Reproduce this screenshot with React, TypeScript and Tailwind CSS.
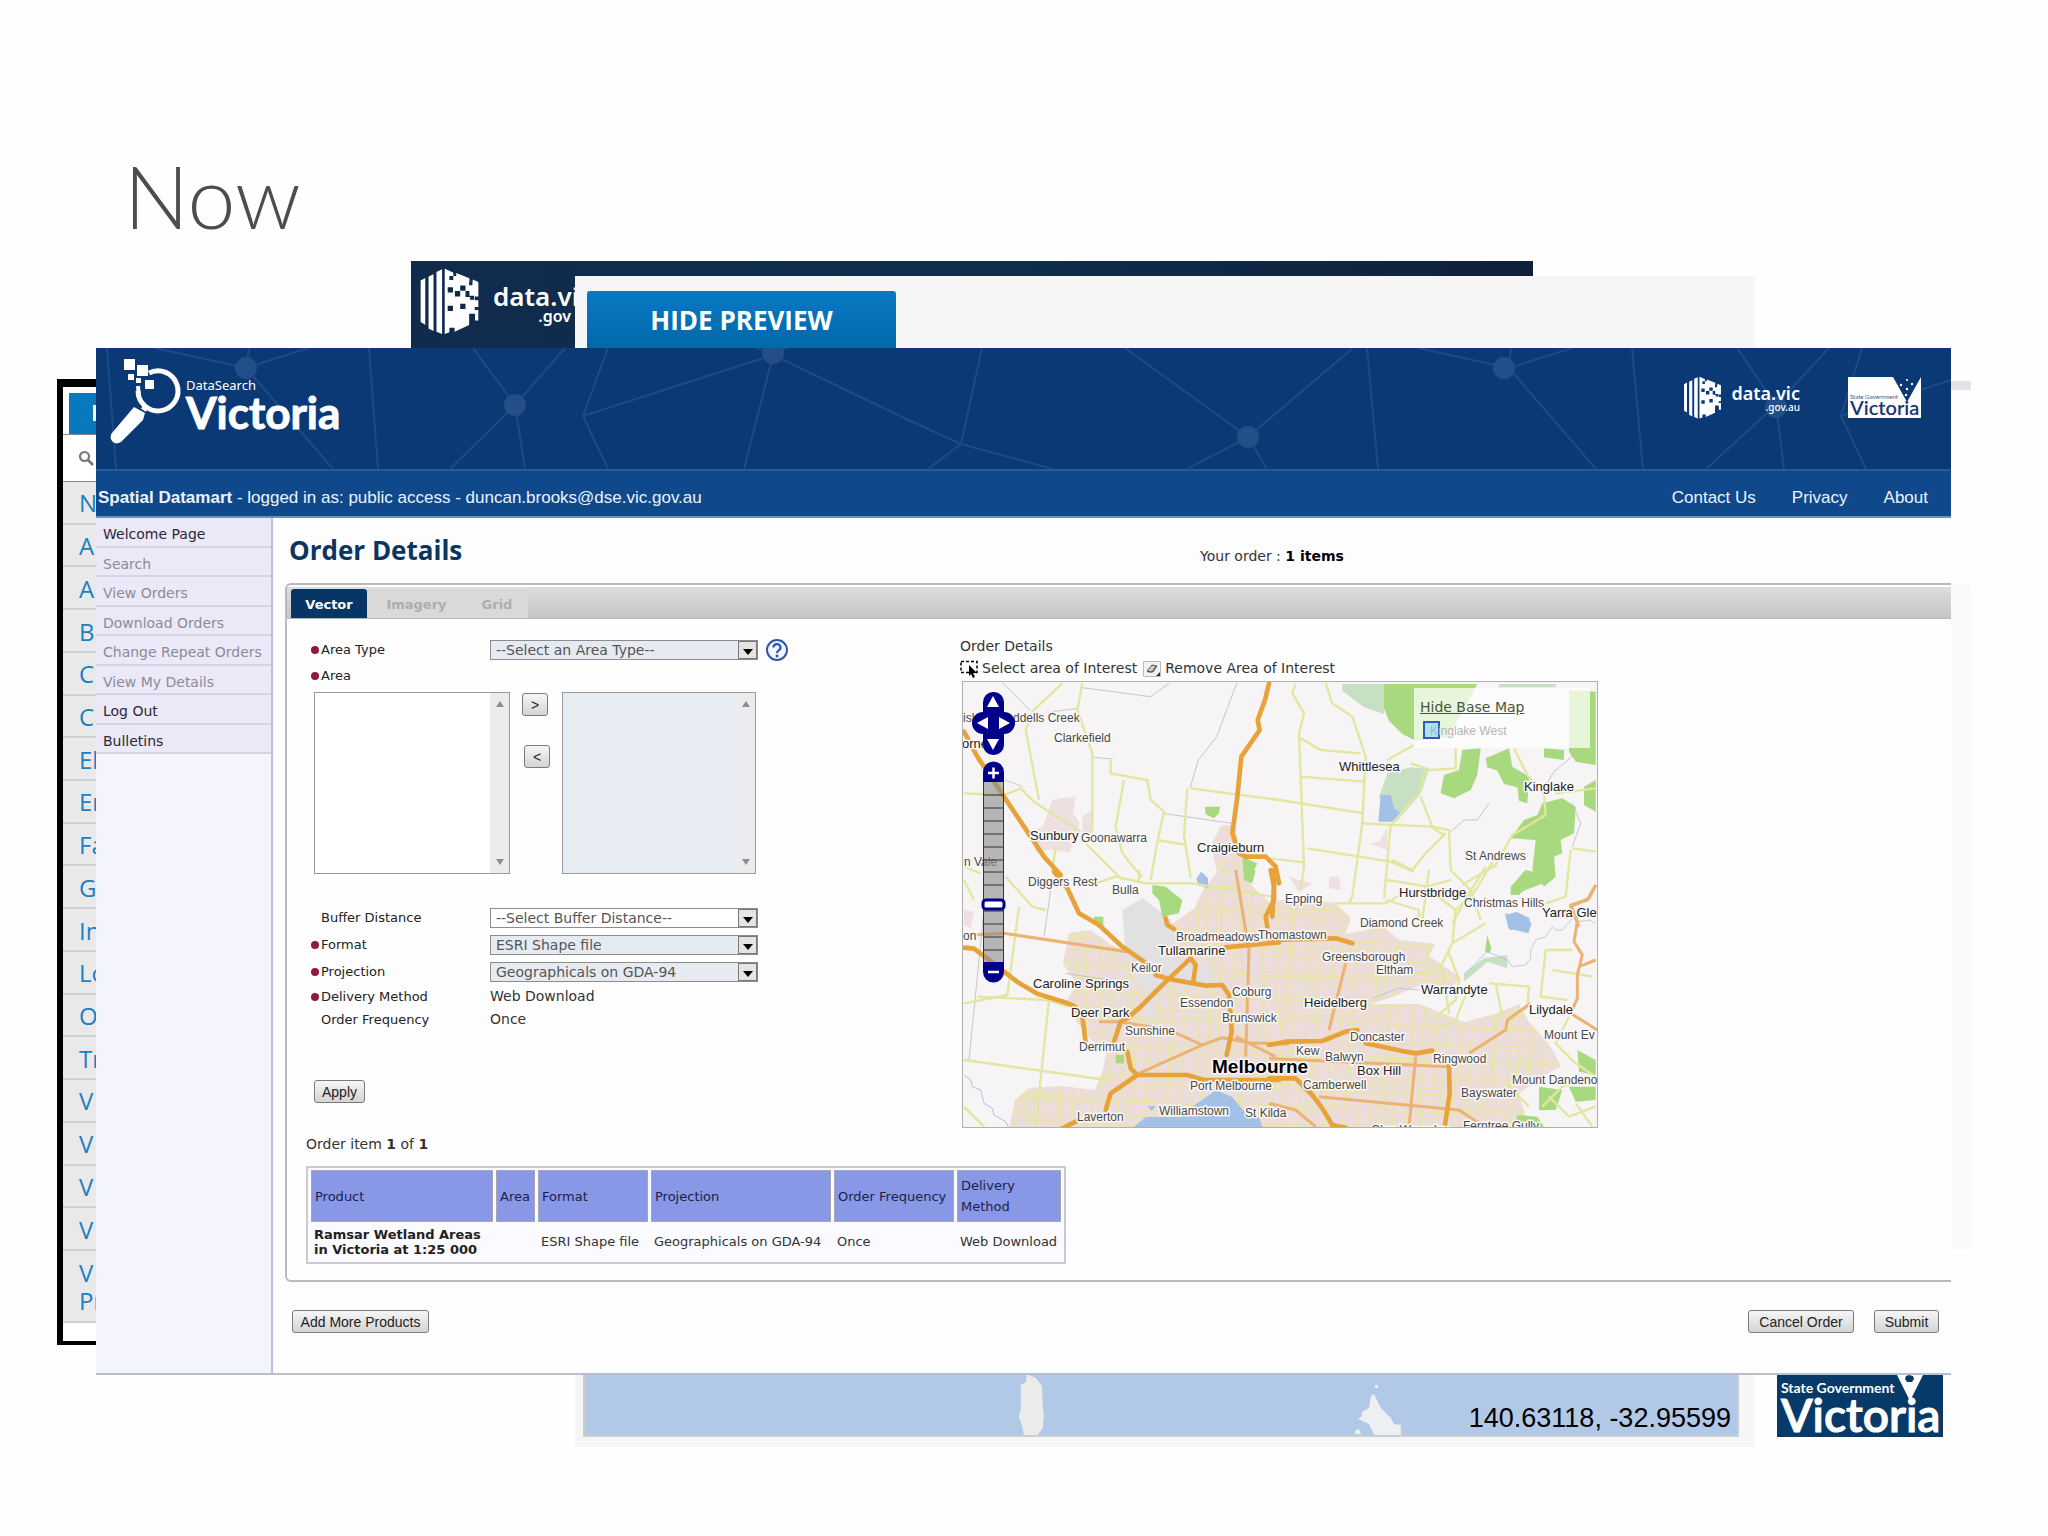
import React from "react";

const SERVICES = ["N", "A", "A", "B", "C", "C", "El", "En", "Fa", "G", "In", "Lo", "O", "Tr", "V", "V", "V", "V"];

const MENU = [
  { label: "Welcome Page", active: true },
  { label: "Search", active: false },
  { label: "View Orders", active: false },
  { label: "Download Orders", active: false },
  { label: "Change Repeat Orders", active: false },
  { label: "View My Details", active: false },
  { label: "Log Out", active: true },
  { label: "Bulletins", active: true },
];

/* ---------- logos ---------- */

function CubeMark({ className, ink }: { className: string; ink: string }) {
  return (
    <svg viewBox="0 0 185 206" className={className} aria-hidden="true">
      <g fill="#fff">
        <path d="M5 38l14-8v142l-14-8z" />
        <path d="M29 26l15-7v172l-15-8z" />
        <path d="M53 12l17-8v196l-17-7z" />
        <path d="M78 2l14 6 12 6v10h9V15l40 16v10h10v-6l17 7v44h-11v12h11v20h-11v9h11v32h-10v-20h-18v34l-44 20v-12H92v14l-14 5z" />
      </g>
      <g fill={ink}>
        <path d="M87 58h16v16H87zM125 53h16v16h-16zM109 70h16v16h-16zM87 114h16v16H87zM125 108h16v16h-16zM141 70h12v14h14v12h-12v-8h-14z" />
        <path d="M92 24h12v12H92zM152 40h10v12h-10z" />
      </g>
    </svg>
  );
}

function DataSearchLogo() {
  return (
    <svg viewBox="0 0 240 92" className="h-[92px] w-[240px]" role="img" aria-label="DataSearch Victoria">
      <g fill="#fff">
        <path d="M14 3h11v11H14zM27 9h11v11H27zM18 18h6v6h-6zM26 22h5v5h-5zM35 24h9v9h-9z" />
        <path d="M24 51l11 6-2 7-21 21a6 6 0 0 1-10-8z" />
      </g>
      <path d="M27 36A20 20 0 1 0 38 18" fill="none" stroke="#fff" strokeWidth="5" transform="translate(1 -1)" />
      <path d="M28 30l1 12" stroke="#fff" strokeWidth="4" />
      <path d="M32 51l5 3" stroke="#fff" strokeWidth="4" />
      <text x="76" y="34" fill="#fff" fontFamily="Noto Sans, sans-serif" fontSize="13">DataSearch</text>
      <text x="76" y="73" fill="#fff" stroke="#fff" fontFamily="Lato, sans-serif" fontWeight="700" fontSize="44">Victoria</text>
    </svg>
  );
}

function VicBadge() {
  return (
    <svg viewBox="0 0 73 41" className="h-[41px] w-[73px]" role="img" aria-label="State Government Victoria">
      <path d="M0 0h73v41H0z" fill="#fff" />
      <path d="M45 0h28L59 25z" fill="#0b3873" />
      <g fill="#fff">
        <circle cx="59" cy="3" r="1" /><circle cx="53" cy="8" r="1.2" /><circle cx="64" cy="7" r="1.2" />
        <circle cx="59" cy="12" r="1.2" /><circle cx="58" cy="18" r="1.2" />
      </g>
      <text x="2" y="22" fill="#35568b" fontFamily="Lato, sans-serif" fontSize="6">State Government</text>
      <text x="2" y="38" fill="#16366f" fontFamily="Lato, sans-serif" fontWeight="600" fontSize="20">Victoria</text>
    </svg>
  );
}

function HeaderNetwork() {
  return (
    <svg viewBox="96 348 1855 121" preserveAspectRatio="xMinYMin slice" className="absolute inset-0 h-full w-full" aria-hidden="true">
      <g fill="none" stroke="#2a5490" strokeWidth="2" opacity=".65">
        <path d="M107 348L116 469M155 348L246 368L308 348M249 348L246 368L333 469M369 348L378 469" />
        <path d="M473 348L515 405L565 348M450 469L515 405L525 469M608 348L583 416L608 469M583 416L773 355L744 469M740 340L773 355L900 416L961 444L1053 469M800 340L773 355M982 348L961 444L928 469" />
        <path d="M1125 348L1248 437L1353 348M1187 469L1248 437L1267 469M1367 348L1378 469" />
        <path d="M1418 348L1509 368L1572 348M1511 348L1509 368L1596 469M1632 348L1643 469" />
        <path d="M1737 348L1776 405L1829 348M1706 469L1776 405L1784 469M1862 348L1841 416L1866 469M1841 416L1951 380" />
      </g>
      <g fill="#234e88">
        <circle cx="246" cy="368" r="11" /><circle cx="515" cy="405" r="11" /><circle cx="773" cy="353" r="11" />
        <circle cx="1248" cy="437" r="11" /><circle cx="1504" cy="368" r="11" /><circle cx="1776" cy="407" r="11" />
      </g>
    </svg>
  );
}

/* ---------- map ---------- */

type Label = [string, number, number, number?];

const LABELS: Label[] = [
  ["isl", 964, 722], ["ddells Creek", 1014, 722], ["Clarkefield", 1055, 742], ["orne", 963, 748, 13],
  ["Sunbury", 1031, 840, 13], ["Goonawarra", 1082, 842], ["n Vale", 965, 866], ["Craigieburn", 1198, 852, 13],
  ["Diggers Rest", 1029, 886], ["Bulla", 1113, 894], ["on", 964, 940], ["Broadmeadows", 1177, 941],
  ["Thomastown", 1259, 939], ["Tullamarine", 1159, 955, 13], ["Keilor", 1132, 972], ["Caroline Springs", 1034, 988, 13],
  ["Coburg", 1233, 996], ["Essendon", 1181, 1007], ["Deer Park", 1072, 1017, 13], ["Brunswick", 1223, 1022],
  ["Sunshine", 1126, 1035], ["Derrimut", 1080, 1051], ["Port Melbourne", 1191, 1090],
  ["Williamstown", 1160, 1115], ["Laverton", 1078, 1121], ["St Kilda", 1246, 1117], ["Whittlesea", 1340, 771, 13],
  ["Kinglake", 1525, 791, 13], ["St Andrews", 1466, 860], ["Hurstbridge", 1400, 897, 13], ["Christmas Hills", 1465, 907],
  ["Yarra Gle", 1543, 917, 13], ["Epping", 1286, 903], ["Diamond Creek", 1361, 927], ["Greensborough", 1323, 961],
  ["Eltham", 1377, 974], ["Warrandyte", 1422, 994, 13], ["Heidelberg", 1305, 1007, 13], ["Doncaster", 1351, 1041],
  ["Kew", 1297, 1055], ["Lilydale", 1530, 1014, 13], ["Mount Ev", 1545, 1039], ["Balwyn", 1326, 1061],
  ["Ringwood", 1434, 1063], ["Box Hill", 1358, 1075, 13], ["Camberwell", 1304, 1089], ["Mount Dandeno", 1513, 1084],
  ["Bayswater", 1462, 1097], ["Ferntree Gully", 1464, 1130], ["Glen Waverley", 1372, 1134],
];

const NW = "translate(940 620) scale(.33333)";
const NE = "translate(1270 670) scale(.33333)";
const SW = "translate(940 870) scale(.33333)";
const SE = "translate(1270 870) scale(.33333)";

const URBAN =
  "M1070 933L1092 930L1112 945L1130 952L1146 966L1160 962L1178 950L1172 925L1196 908L1204 890L1218 872L1212 845L1222 826L1236 824L1240 850L1250 862L1252 885L1270 902L1300 898L1336 903L1352 918L1346 934L1368 930L1384 926L1400 940L1436 944L1430 956L1462 978L1450 988L1424 984L1396 996L1372 1004L1420 1004L1440 1012L1466 1022L1496 1014L1520 1004L1530 1022L1550 1044L1562 1066L1540 1078L1520 1094L1530 1129L1010 1129L1016 1100L1030 1088L1062 1086L1096 1090L1104 1070L1108 1048L1092 1040L1078 1022L1068 1000L1078 984L1064 964z";

const BAY = "M1132 1129L1147 1117L1183 1117L1193 1107L1203 1100L1217 1090L1233 1097L1250 1117L1260 1117L1264 1129z";

function gridLines() {
  const v: string[] = [];
  for (let i = 0; i < 62; i++) {
    const x = 1000 + i * 9 + ((i * 7) % 5);
    const top = 820 + ((i * 37) % 90);
    v.push(`M${x} ${top}L${x - 6 + (i % 3) * 3} ${top + 110}L${x - 10 + (i % 4) * 4} 1040L${x - 12} 1130`);
  }
  for (let i = 0; i < 34; i++) {
    const y = 830 + i * 9 + ((i * 5) % 4);
    v.push(`M1000 ${y}l130 ${(i % 3) * 4}l${90 + (i % 4) * 25} ${(i % 4) * 3}l120 ${(i % 5) * 3 - 3}l240 ${12 - (i % 3) * 5}`);
  }
  return v.join("");
}

function BaseMap() {
  return (
    <svg viewBox="964 682 634 445" preserveAspectRatio="none" className="h-full w-full" role="img" aria-label="Map of Melbourne">
      <defs>
        <clipPath id="urban"><path d={URBAN} /></clipPath>
      </defs>
      <path d="M963 682h636v448H963z" fill="#f6f4f5" />
      <path d={URBAN} fill="#ecdcdc" />
      <g fill="#eedfe0">
        <path transform={NW} d="M340 540l70-12-8 50 20 30-30 90-60-10-40 10-20-60 40-20zM430 590l30-20v70l-30-5z" />
        <path transform={NE} d="M300 520l30-5 25-40v65zM60 620l30 10 40 10-40 25zM180 620l30 0 5 40-35-5z" />
        <path transform={SW} d="M75 120l30 5-10 50-20-10z" />
      </g>
      <g clipPath="url(#urban)">
        <path d={gridLines()} fill="none" stroke="#e8e6a4" strokeWidth="1.2" />
      </g>
      <path transform={SW} d="M550 120l60-35 80 60 40 60-20 60 60 20 50 10 0 60-60 0-70-20-60 20 20 60 10 40-40-30 0-60-60-110z" fill="#e2e1e2" />
      <g fill="#a8d97f">
        <path transform={NE} d="M345 42h280l-30 60-60 100-95 10-40-20-40-40-20-50zM900 60l80 5v220l-60-10-20-30zM825 235l60 5v30l-60-8zM580 240l55-5-10 80-20 45-50 25-40-15 10-55 45-15zM650 265l70-30 10 55 50 30-5 80-25-8-5-40-40-10-20-40-30-10zM820 400l60-15 40 25-5 80-40 20 5 40-25 10 5 60-35 30-35-50 10-90-75-5 40-55 40-15zM770 600l20 5-10 40-30 30-25 0 0-25z" />
        <path transform={NE} d="M945 350l35-20v95l-35-20z" />
        <path transform={NW} d="M798 560l45 0-3 20-15 15-25-12zM910 710l45 20-20 45-20 0z" />
        <path transform={SW} d="M640 45l40 5 50 40-10 40-50 10-10-50-20-20zM465 140l28 0 0 30-28-5zM915 0h35l-10 40-25-10zM530 555l25 0 0 25-25 0z" />
        <path transform={SE} d="M765 5l85 0 0 25-80 30-30 15-15-20zM655 195l12 40-5 15-14-5zM925 540l55 30v45l-50-10zM810 650l70 10-20 60-50 0zM900 650l80 0v40l-60 5zM745 735l60 5 20 30-90 0z" />
      </g>
      <g fill="#c7dfc2">
        <path transform={NE} d="M220 42h125v90l-60-20-65-50zM690 42h170v10H690zM355 310l70-18 55 5-25 75-75 85-50-75z" />
        <path transform={SE} d="M585 310l60-45 70-10 0 40-60-20-40 35-30 25z" />
      </g>
      <g fill="#a3c0e6">
        <path transform={NE} d="M335 375l30 0 10 40 20 15-25 25-42 0zM712 735l30-10 40 20 0 30-60 5z" />
        <path transform={SE} d="M708 130l50 10 30 20-10 30-60-15z" />
        <path d={BAY} />
        <path transform={SW} d="M772 25l15-20 20 20 0 30-30-10zM625 708l25 0-12 15z" />
      </g>
      <g fill="none" stroke="#b9bcc4" strokeWidth="2.5">
        <path transform={NW} d="M190 188l40 40 45 45M430 203l205 27 55-40M893 190l-60 160-55 70-25 85M670 580l210 30M200 480l50 20M340 275l80-10M465 412l55 5" />
        <path transform={NE} d="M545 485l40-35 40 0 35-50M915 255l-60 50-25 40M910 400l25 60-25 70" />
        <path transform={SW} d="M135 120L90 570M335 60l-20 140M380 310l130 20" />
        <path transform={SE} d="M980 160l-20-10-30 5-15-15-35 40-20 0-10-10-20 30-30 10-15 30 0 25-15 20-40 5-15-20-60-25-60 60M310 385l80-30 60 5" stroke="#b4c3dd" />
        <path transform={SW} d="M75 615l20 15 5 20 25 10 10 40 25 15 5 20 35 20 10 20" stroke="#9fb8dd" />
      </g>
      <g fill="none" stroke="#e1e79f" strokeWidth="7" strokeLinejoin="round">
        <path transform={NW} d="M430 190l-15 80 45 130 0 230-30 30 60 60 60 60M370 190l-85 80-25 60 40 210M75 520l120 5 50-20 40 40 60 40 80 50M515 420v40l110 20 10 60 40 35-20 90-20 115M555 480l-25 140 20 80 40 50 20 20M745 505l-10 140 20 130M755 505l265 35M655 660l90 15M350 680l-10 70M75 740l50 20" />
        <path transform={NE} d="M80 40l-10 30 35 60-15 60 15 400-10 70M170 40l20 60 60 40 40 120-10 200-30 220-10 20M95 205l60 35 120 10M95 320l190 15M0 385l285 45M115 535l250 40 70 30M355 270l80-45M560 235l0 60-75 5-60-20M735 235l40 80 50 60 5 60-100 60-50 90-100 60M470 300l-20 70-85 95-20 220M275 460l210 10 40 25M455 380l35 90 50 10 5 120 60 60 30 90M370 570l60 30 40-50 60-60M355 630l120 20 70-20M0 565l105 12M905 540l-15 140-60 20M910 535l70 10M860 370l120-15M350 690l100 30 0 50M480 600l-20 150M650 590l-50 80-50 90" />
        <path transform={SW} d="M240 110l-35 265-130 25M200 20l80 90 40 10M115 380l210 10 60 20M330 390l-40 380M75 570l430 60M245 680l120 0M75 710l60 60M75 30l30 60M470 40l60-20 90 20 140 0 240 40M600 40l0-40" />
        <path transform={SE} d="M200 100l150 0 70-40 60 0 80 60-10 100-40 80-90 10M560 120l60-60 60-100M550 220l100-60M540 250l30 80-10 60-70 60M830 240l-15 140 80 10M830 240l80 0M660 340l120 10-5 60-60 50M680 340l20 100M600 350l-40 100-80 40M520 300l20 130M850 300l120 20M1000 620l-120 30-60 60M900 440l-40 80 60 60 60 40M920 700l50 70M840 680l60 60 80-30M760 560l-40 90 60 60" />
      </g>
      <g fill="none" stroke="#ecb274" strokeWidth="9" strokeLinejoin="round">
        <path transform={SW} d="M105 195l90-5 370 55M890 0l40 240-10 320M480 455l60 0 150 25 100 45 60-22 80 15 120 5M600 610l190-85M890 500l120 60" />
        <path transform={SE} d="M230 280l-50 200M440 560l-20 210M0 565l540 25M150 680l420 40 60 40M600 550l110-70 5-30 70-50M980 45l-25 45-50 15 20 50-10 60 25 40-15 60 0 70-20 45 80 50M930 290l50-20M0 700l80 20 60 50" />
        <path transform={NE} d="M980 645l-20 40-55 25 25 60" />
      </g>
      <g fill="none" stroke="#e8a23a" strokeWidth="14" strokeLinejoin="round" strokeLinecap="round">
        <path transform={NW} d="M990 190l-12 50-22 60 6 30-55 80-12 120-15 110 20 60 20 10 60 0 30 30 10 50M75 335l40 75 80 120 60 90 60 90 50 55" />
        <path transform={SW} d="M345 5l40 50 35 75 60 35 70 65 65 45M650 315l40 12 110 20 50-2 20 30 8 110-15 70M680 145l5 20 20 12M860 232l160-15M755 265l15 20-8 55M755 265l-80 75-70 70-40 35-20 10-20 60M75 233l30 3 40 30 90 70 60 35 80 25 30 12 25 30 10 80M565 545l10 50 20 20-80 55-15 50M410 755l-40 20M595 615l150 0 50 15 130 0 95 0M1005 0l0 90-25 50 5 30" />
        <path transform={SE} d="M0 210l200-5 50 15M0 525l50-10 110-2 70-28 35-5M290 520l120 25 30 5 50-8M540 580l2 90-14 95M0 625l80 0 50 50 30 40 30 50 40 8M5 0l10 50-5 90" />
      </g>
      <g fontFamily="Liberation Sans, Arial, sans-serif" stroke="#fbf9f9" strokeWidth="3" strokeLinejoin="round" style={{ paintOrder: "stroke" }}>
        {LABELS.map(([text, x, y, size]) => (
          <text key={text + x} x={x} y={y} fontSize={size ?? 12} fill={size ? "#222" : "#484848"}>{text}</text>
        ))}
        <text x="1213" y="1073" fontSize="19" fontWeight="700" fill="#000">Melbourne</text>
      </g>
      {/* pan and zoom controls */}
      <g fill="#00008b">
        <rect x="984" y="692" width="21" height="63" rx="10" />
        <rect x="973" y="712" width="43" height="22" rx="11" />
        <path d="M984 782v-10a10.500 10.500 0 0 1 21 0v10zM984 962v10a10.500 10.500 0 0 0 21 0v-10z" />
      </g>
      <path d="M994 696l6 11h-12zM994 750l6-11h-12zM978 723l11-6v12zM1011 723l-11-6v12z" fill="#fff" />
      <path d="M989 773h11M994.500 767.500v11M989 972h11" stroke="#fff" strokeWidth="2.500" />
      <rect x="984" y="782" width="21" height="180" fill="#8a8a8a" fillOpacity=".6" />
      <path d="M984 795h21M984 808h21M984 821h21M984 834h21M984 847h21M984 860h21M984 872h21M984 885h21M984 911h21M984 924h21M984 937h21M984 950h21M984.500 782v180M1004.500 782v180" stroke="#333" strokeWidth="1" />
      <rect x="984" y="900" width="21" height="9" rx="3" fill="#fff" stroke="#00008b" strokeWidth="3" />
      {/* base map switcher */}
      <rect x="1415" y="688" width="176" height="60" fill="#fff" fillOpacity=".72" />
      <rect x="1425" y="722" width="15" height="16" fill="#a9e3f7" stroke="#3558b5" strokeWidth="2" />
      <text x="1431" y="735" fontFamily="Liberation Sans, Arial, sans-serif" fontSize="12" fill="#b5b5b5">Kinglake West</text>
    </svg>
  );
}

/* ---------- form parts ---------- */

function Label({ text, required, htmlFor }: { text: string; required?: boolean; htmlFor?: string }) {
  return (
    <label htmlFor={htmlFor} className="flex w-[179px] shrink-0 items-center text-[13px] text-[#222]">
      <span className="flex w-[10px] shrink-0">{required && <span className="h-2 w-2 rounded-full bg-[#8f1a3a]" />}</span>
      {text}
    </label>
  );
}

function Select({ id, value, tinted }: { id: string; value: string; tinted?: boolean }) {
  return (
    <span className={"relative flex h-5 w-[268px] border border-[#8c8c8c] " + (tinted ? "bg-[#e5ebf1]" : "bg-white")}>
      <select id={id} className="w-full appearance-none bg-transparent pl-[5px] text-[14px] leading-[18px] text-[#555] outline-none">
        <option>{value}</option>
      </select>
      <span className="pointer-events-none absolute inset-y-0 right-0 flex w-[19px] items-center justify-center border border-[#777] bg-[#e4e4e4]">
        <svg viewBox="0 0 10 6" className="mt-1 h-[6px] w-[10px]" aria-hidden="true"><path d="M0 0h10L5 6z" fill="#000" /></svg>
      </span>
    </span>
  );
}

function ListBox({ label, className }: { label: string; className: string }) {
  return (
    <div className={"flex h-[182px] border border-[#9a9a9a] " + className}>
      <select multiple aria-label={label} className="min-w-0 flex-1 appearance-none overflow-hidden bg-transparent outline-none" />
      <div className="flex w-[19px] flex-col items-center justify-between bg-[#ececee] py-2" aria-hidden="true">
        <svg viewBox="0 0 8 6" className="h-[6px] w-2"><path d="M0 6h8L4 0z" fill="#8d8d8d" /></svg>
        <svg viewBox="0 0 8 6" className="h-[6px] w-2"><path d="M0 0h8L4 6z" fill="#8d8d8d" /></svg>
      </div>
    </div>
  );
}

function Button({ children, className = "" }: { children: React.ReactNode; className?: string }) {
  return (
    <button
      type="button"
      className={"flex h-[23px] shrink-0 items-center justify-center rounded-[3px] border border-[#7b7b7b] bg-linear-to-b from-[#f6f6f6] to-[#d4d4d6] font-['Liberation_Sans',Arial,sans-serif] text-[14px] leading-none whitespace-nowrap text-[#222] " + className}
    >
      {children}
    </button>
  );
}

const TH = "border border-[#a6a6b4] bg-[#8998e6] px-[3px] text-left text-[13px] leading-[21px] font-normal text-[#1b2148]";

/* ---------- windows ---------- */

function ServicesWindow() {
  return (
    <div className="absolute top-[379px] left-[57px] flex h-[966px] w-[60px] flex-col overflow-hidden border-4 border-t-8 border-l-[6px] border-black bg-white font-['Open_Sans',sans-serif] text-[24px] leading-7 text-[#1c7fc4]">
      <div className="mt-[6px] ml-[6px] h-[41px] shrink-0 bg-[#0879bd] py-3 pl-6">
        <div className="h-4 w-1 bg-white" />
      </div>
      <div className="flex h-[48px] shrink-0 items-center border-y border-[#888] pl-[15px]">
        <svg viewBox="0 0 16 16" className="h-4 w-4" aria-hidden="true">
          <circle cx="6.500" cy="6.500" r="4.500" fill="none" stroke="#777" strokeWidth="2.200" />
          <path d="M10 10l5 5" stroke="#777" strokeWidth="2.600" />
        </svg>
      </div>
      <ul className="flex flex-1 flex-col bg-[#e9e9e9]">
        {SERVICES.map((s, i) => (
          <li key={i} className="flex flex-1 items-center border-b-2 border-[#cfcfcf] pt-[2px] pl-4">{s}</li>
        ))}
        <li className="h-[72px] shrink-0 border-b-2 border-[#cfcfcf] pt-2 pl-4">V<br />Pr</li>
      </ul>
      <div className="h-[18px] shrink-0 bg-white" />
    </div>
  );
}

function PreviewWindow() {
  return (
    <div className="absolute top-[276px] right-[293px] left-[575px] flex h-[1171px] flex-col justify-between bg-[#f6f6f7] pr-4">
      <button type="button" className="mt-[15px] ml-3 h-[62px] w-[309px] rounded-t-[3px] bg-linear-to-b from-[#0879c4] to-[#0267a8] pb-1 font-['Open_Sans',sans-serif] text-[26px] font-bold text-white">
        HIDE PREVIEW
      </button>
      <div className="relative mb-[10px] ml-2 flex h-[67px] items-end justify-end border-2 border-[#c9ced4] bg-[#b1c9e7] pr-[6px] font-['Liberation_Sans',Arial,sans-serif] text-[27px] leading-[34px] text-black">
        <svg viewBox="584 1374 1155 63" className="absolute inset-0 h-full w-full" aria-hidden="true">
          <path d="M1027 1376l9 4 6 8 1 20 1 10-1 12-6 8-13-1-2-10-3-8 2-8 0-24 5-3z" fill="#ecedea" />
          <path d="M1372 1398l3-2 4 8 3 6 10 10 3 6 7 1 0 11-26 0-6-12-11-5 4-3 0-4 7-4zM1376 1387l3 0 0 3-3 0zM1356 1433l4-2 2 5-6 0z" fill="#ecf0f0" />
        </svg>
        <span className="relative">140.63118, -32.95599</span>
      </div>
    </div>
  );
}

function OrderWindow() {
  return (
    <div className="relative mr-[97px] ml-24 border-b-2 border-[#b9bfce] bg-[#fdfdfe] font-['DejaVu_Sans',Verdana,sans-serif] text-[14px] text-[#333]">
      <header>
        <div className="relative flex h-[121px] items-start justify-between overflow-hidden bg-[#0a3976] pr-[30px] pl-[14px]">
          <HeaderNetwork />
          <div className="relative pt-2"><DataSearchLogo /></div>
          <div className="relative flex items-start gap-12 pt-7">
            <div className="flex gap-[9px]">
              <CubeMark className="h-[44px] w-[39px]" ink="#0a3976" />
              <div className="flex flex-col items-end pt-[7px] font-['Noto_Sans',sans-serif] text-white">
                <span className="text-[18px] leading-5 font-semibold">data.vic</span>
                <span className="text-[10px] leading-2 font-medium">.gov.au</span>
              </div>
            </div>
            <div className="pt-px"><VicBadge /></div>
          </div>
        </div>
        <div className="flex h-[49px] items-center justify-between border-y-2 border-t-[#1f5c9f] border-b-[#6d90c0] bg-[#0f498c] pt-2 pr-[23px] pl-[2px] font-['Liberation_Sans',Arial,sans-serif] text-[#eef3fb]">
          <p className="text-[17px]"><b>Spatial Datamart</b> - logged in as: public access - duncan.brooks@dse.vic.gov.au</p>
          <nav className="flex gap-9 text-[17px]">
            <a href="#contact">Contact Us</a>
            <a href="#privacy">Privacy</a>
            <a href="#about">About</a>
          </nav>
        </div>
      </header>

      <div className="flex">
        <aside className="w-[177px] shrink-0 border-r-2 border-[#bfbfdc] bg-[#f3f4fd]">
          <nav className="grid h-[236px] auto-rows-fr">
            {MENU.map((m) => (
              <a key={m.label} href="#menu" className={"flex items-center border-b-2 border-[#d3d3e4] bg-[#ebe9f7] pt-[6px] pl-[7px] whitespace-nowrap " + (m.active ? "text-[#2c2636]" : "text-[#8d8a99]")}>
                {m.label}
              </a>
            ))}
          </nav>
        </aside>

        <main className="min-w-0 flex-1 pb-10">
          <div className="flex h-[65px] items-center pl-4">
            <h1 className="w-[911px] pb-[2px] font-['Open_Sans',sans-serif] text-[26px] leading-8 font-bold text-[#0b3560]">Order Details</h1>
            <p className="pt-3">Your order : <b className="text-black">1 items</b></p>
          </div>

          <section className="ml-3 rounded-l-[6px] border-y-2 border-l-2 border-[#b9bac0] bg-[#fefefe] pt-[2px] pb-4">
            <div className="flex h-8 items-end border-b border-[#b8b8b8] bg-linear-to-b from-[#dedee0] to-[#c5c4c6] pl-1 text-[13px] font-bold" role="tablist">
              <button type="button" role="tab" aria-selected="true" className="h-[29px] w-[76px] rounded-t-[3px] bg-[#063566] pt-[2px] text-white">Vector</button>
              <button type="button" role="tab" aria-selected="false" className="h-[29px] w-[99px] bg-[#d9d9da] pt-[2px] text-[#adadb0]">Imagery</button>
              <button type="button" role="tab" aria-selected="false" className="h-[29px] w-[62px] bg-[#d9d9da] pt-[2px] text-[#adadb0]">Grid</button>
            </div>

            <div className="flex items-start">
              <form className="w-[673px] shrink-0 pt-[18px] pl-6">
                <div className="flex h-[26px] items-center">
                  <Label text="Area Type" required htmlFor="areaType" />
                  <Select id="areaType" value="--Select an Area Type--" tinted />
                  <svg viewBox="0 0 24 24" className="ml-[7px] h-6 w-6" role="img" aria-label="Help">
                    <circle cx="12" cy="12" r="10" fill="#f2f6ff" stroke="#2f55a8" strokeWidth="2" />
                    <path d="M8.500 9.500a3.500 3.300 0 1 1 5.200 2.800c-1.200.8-1.700 1.200-1.700 2.700" fill="none" stroke="#2f55a8" strokeWidth="2.200" />
                    <circle cx="12" cy="18" r="1.400" fill="#2f55a8" />
                  </svg>
                </div>
                <div className="flex h-[26px] items-center"><Label text="Area" required /></div>
                <div className="mt-[3px] flex pl-[3px]">
                  <ListBox label="Available areas" className="w-[196px] bg-white" />
                  <div className="flex w-[52px] flex-col items-start gap-[29px] pt-px pl-3">
                    <Button className="w-[26px]">&gt;</Button>
                    <Button className="ml-[2px] w-[26px]">&lt;</Button>
                  </div>
                  <ListBox label="Selected areas" className="w-[194px] bg-[#e6ecf2]" />
                </div>
                <div className="mt-[30px] flex h-[27px] items-center"><Label text="Buffer Distance" htmlFor="buffer" /><Select id="buffer" value="--Select Buffer Distance--" /></div>
                <div className="flex h-[27px] items-center"><Label text="Format" required htmlFor="format" /><Select id="format" value="ESRI Shape file" tinted /></div>
                <div className="flex h-[27px] items-center"><Label text="Projection" required htmlFor="projection" /><Select id="projection" value="Geographicals on GDA-94" tinted /></div>
                <div className="flex h-[23px] items-center"><Label text="Delivery Method" required />Web Download</div>
                <div className="flex h-[23px] items-center"><Label text="Order Frequency" />Once</div>
                <Button className="mt-[49px] ml-[3px] w-[51px]">Apply</Button>
              </form>

              <div className="w-[636px] pt-[17px]">
                <h2 className="leading-5">Order Details</h2>
                <div className="flex h-[25px] items-center gap-[6px]">
                  <a href="#select" className="flex items-center gap-[2px]">
                    <svg viewBox="0 0 20 18" className="h-[18px] w-5" aria-hidden="true">
                      <rect x="1" y="1.500" width="16" height="11" fill="none" stroke="#000" strokeWidth="1.500" strokeDasharray="3 2" />
                      <path d="M9 5l8 8h-4l2 4-2 1-2-4-2 2z" fill="#000" />
                    </svg>
                    Select area of Interest
                  </a>
                  <a href="#remove" className="flex items-center gap-1">
                    <svg viewBox="0 0 18 16" className="h-4 w-[18px]" aria-hidden="true">
                      <path d="M.5.5h17v15H.5z" fill="#f1f1f1" stroke="#bbb" />
                      <path d="M4 10l5-6 5 1-4 6H5z" fill="#ccc" stroke="#555" /><path d="M4 10l5 1 4-6" fill="none" stroke="#555" />
                      <path d="M17 11v4h-4z" fill="#333" />
                    </svg>
                    Remove Area of Interest
                  </a>
                </div>
                <div className="relative ml-[2px] h-[447px] w-[636px] border border-[#b0b0b0]">
                  <BaseMap />
                  <a href="#basemap" className="absolute top-[15px] left-[457px] text-[14px] text-[#45553f] underline">Hide Base Map</a>
                </div>
              </div>
            </div>

            <p className="mt-[6px] pl-[19px] leading-5">Order item <b>1</b> of <b>1</b></p>
            <table className="mt-3 ml-[19px] h-[98px] w-[760px] table-fixed border-separate border-spacing-x-[3px] border-spacing-y-[2px] border-2 border-[#c9cad2] bg-[#fafaff]">
              <colgroup>
                <col className="w-[182px]" /><col className="w-[39px]" /><col className="w-[110px]" /><col className="w-[180px]" /><col className="w-[120px]" /><col />
              </colgroup>
              <thead>
                <tr className="h-[52px]">
                  <th className={TH}>Product</th>
                  <th className={TH}>Area</th>
                  <th className={TH}>Format</th>
                  <th className={TH}>Projection</th>
                  <th className={TH + " whitespace-nowrap"}>Order Frequency</th>
                  <th className={TH}>Delivery Method</th>
                </tr>
              </thead>
              <tbody>
                <tr className="text-[13px] whitespace-nowrap">
                  <td className="px-[3px] leading-[15px] font-bold text-[#222]">Ramsar Wetland Areas<br />in Victoria at 1:25 000</td>
                  <td />
                  <td className="px-[3px]">ESRI Shape file</td>
                  <td className="px-[3px]">Geographicals on GDA-94</td>
                  <td className="px-[3px]">Once</td>
                  <td className="px-[3px]">Web Download</td>
                </tr>
              </tbody>
            </table>
          </section>

          <div className="mt-7 flex pr-3 pl-[19px]">
            <Button className="w-[137px]">Add More Products</Button>
            <Button className="ml-auto w-[106px]">Cancel Order</Button>
            <Button className="ml-5 w-[65px]">Submit</Button>
          </div>
        </main>
      </div>
    </div>
  );
}

export default function App() {
  return (
    <div className="relative min-h-screen overflow-hidden bg-[#fefefe] pb-40">
      <div className="flex h-[348px] items-start pt-[140px] pl-[124px]">
        <h1 className="font-['Lato',sans-serif] text-[86px] leading-[112px] font-light text-[#4d4d4d]">Now</h1>
      </div>

      <div className="absolute top-[261px] right-[515px] left-[411px] flex h-[120px] gap-[13px] bg-linear-to-r from-[#112b4d] via-[#0d2f4c] to-[#0f1f3c] pt-[7px] pl-2">
        <CubeMark className="h-[68px] w-[61px]" ink="#10294a" />
        <div className="flex w-[82px] flex-col pt-3 font-['Noto_Sans',sans-serif] font-semibold text-white">
          <span className="text-[26px] leading-8">data.vi</span>
          <span className="pr-1 text-right text-[16px] leading-2">.gov</span>
        </div>
      </div>
      <PreviewWindow />
      <ServicesWindow />
      <div className="absolute top-[381px] right-[77px] h-[9px] w-10 bg-[#e3e3e6]" />
      <div className="absolute top-[585px] right-[77px] h-[664px] w-10 bg-[#fafafd]" />
      <svg viewBox="0 0 166 62" className="absolute top-[1375px] right-[105px] h-[62px] w-[166px]" role="img" aria-label="State Government Victoria">
        <path d="M0 0h166v62H0z" fill="#073a68" />
        <path d="M120 0h26l-13 26z" fill="#fff" />
        <path d="M129 1l3-1 4 1 1 3-2 3-5 0-2-3z" fill="#073a68" />
        <text x="4" y="18" fill="#fff" fontFamily="Lato, sans-serif" fontWeight="700" fontSize="14">State Government</text>
        <text x="4" y="57" fill="#fff" stroke="#fff" fontFamily="Lato, sans-serif" fontWeight="600" fontSize="46">Victoria</text>
      </svg>
      <OrderWindow />
    </div>
  );
}
